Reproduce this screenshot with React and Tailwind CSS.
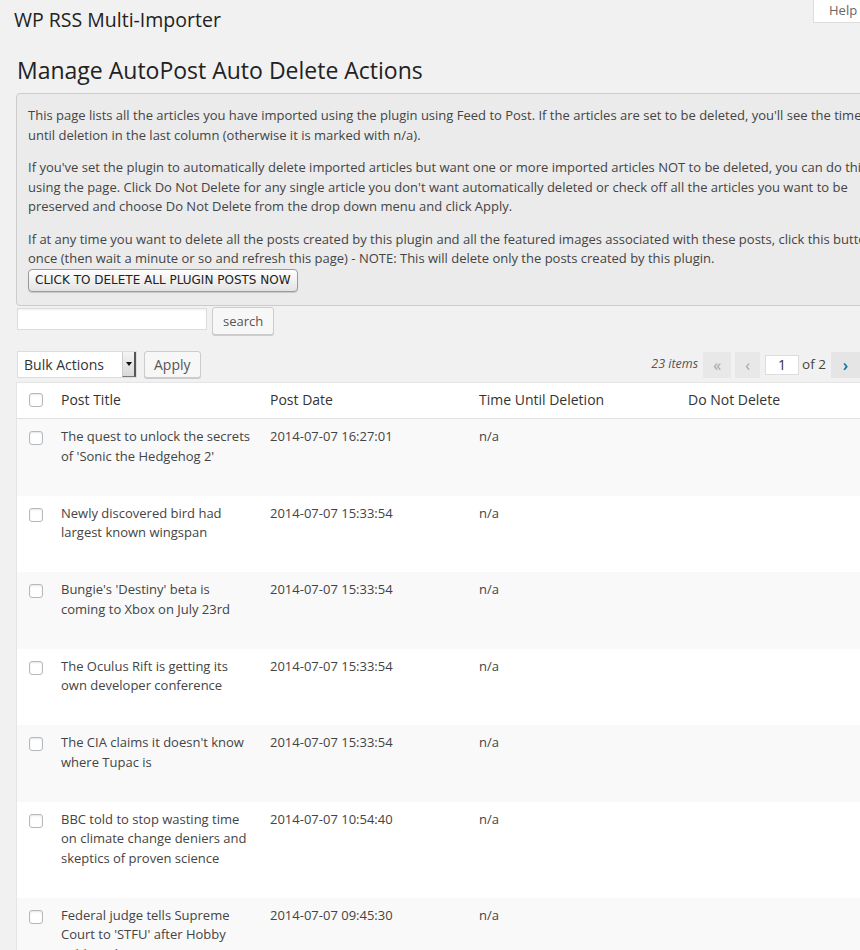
import React from "react";

const rows = [
  { title: "The quest to unlock the secrets of 'Sonic the Hedgehog 2'", date: "2014-07-07 16:27:01" },
  { title: "Newly discovered bird had largest known wingspan", date: "2014-07-07 15:33:54" },
  { title: "Bungie's 'Destiny' beta is coming to Xbox on July 23rd", date: "2014-07-07 15:33:54" },
  { title: "The Oculus Rift is getting its own developer conference", date: "2014-07-07 15:33:54" },
  { title: "The CIA claims it doesn't know where Tupac is", date: "2014-07-07 15:33:54" },
  { title: "BBC told to stop wasting time on climate change deniers and skeptics of proven science", date: "2014-07-07 10:54:40" },
  { title: "Federal judge tells Supreme Court to 'STFU' after Hobby Lobby ruling", date: "2014-07-07 09:45:30" },
];

function Check() {
  return (
    <span className="block w-[14px] h-[14px] rounded-[3px] border border-[#b4b9be] bg-white shadow-[inset_0_1px_2px_rgba(0,0,0,0.1)]" />
  );
}

export default function App() {
  return (
    <div className="relative h-[950px] overflow-hidden bg-[#f1f1f1] text-[13px] text-[#444] font-['Open_Sans',sans-serif]">
      {/* help tab */}
      <div className="absolute top-0 right-0 w-[47px] h-[23px] bg-white border-l border-b border-[#ddd] pl-[15px] text-[13px] leading-[20px] text-[#666]">
        Help
      </div>

      <div className="w-[900px]">
        <h1 className="pl-[14px] pt-[6px] text-[19.5px] leading-[28px] text-[#222]">WP RSS Multi-Importer</h1>
        <h2 className="pl-[17px] pt-[22px] text-[23px] leading-[29px] text-[#222]">Manage AutoPost Auto Delete Actions</h2>

        {/* info box */}
        <div className="ml-[16px] mt-[8px] w-[876px] rounded-[4px] border border-[#ccc] bg-[#ebebeb] pl-[11px] pt-[12px] pb-[13px] leading-[19.5px] text-[#444]">
          <p>
            This page lists all the articles you have imported using the plugin using Feed to Post. If the articles are set to be deleted, you'll see the time until deletion in the last column (otherwise it is marked with n/a).
          </p>
          <p className="mt-[13px]">
            If you've set the plugin to automatically delete imported articles but want one or more imported articles NOT to be deleted, you can do this using the page. Click Do Not Delete for any single article you don't want automatically deleted or check off all the articles you want to be preserved and choose Do Not Delete from the drop down menu and click Apply.
          </p>
          <p className="mt-[13px]">
            If at any time you want to delete all the posts created by this plugin and all the featured images associated with these posts, click this button once (then wait a minute or so and refresh this page) - NOTE: This will delete only the posts created by this plugin.
          </p>
          <button className="block h-[23px] px-[6px] rounded-[4px] border border-[#9a9a9a] bg-gradient-to-b from-white to-[#e3e3e3] shadow-[0_1px_1px_rgba(0,0,0,0.15)] font-['DejaVu_Sans',sans-serif] text-[12px] leading-[21px] text-[#222]">
            CLICK TO DELETE ALL PLUGIN POSTS NOW
          </button>
        </div>

        {/* search */}
        <div className="flex items-start gap-[5px] pl-[17px] pt-[1px]">
          <div className="mt-[1px] w-[190px] h-[22px] border border-[#ddd] bg-white shadow-[inset_0_1px_2px_rgba(0,0,0,0.07)]" />
          <button className="h-[28px] px-[10px] rounded-[3px] border border-[#ccc] bg-[#f7f7f7] text-[13px] leading-[26px] text-[#555] shadow-[0_1px_0_#ccc]">
            search
          </button>
        </div>

        {/* bulk actions + pagination */}
        <div className="flex items-center w-[860px] pl-[17px] pt-[13px] h-[47px]">
          <div className="flex w-[120px] h-[27px] border border-[#ddd] bg-white">
            <span className="flex-1 pl-[6px] text-[14px] leading-[25px] text-[#333]">Bulk Actions</span>
            <span className="flex items-center justify-center w-[14px] bg-gradient-to-b from-[#f4f4f4] to-[#d9d9d9] border-l border-[#ccc] border-r-2 border-r-[#555] border-b border-b-[#777]">
              <svg width="6" height="4" viewBox="0 0 6 4"><path d="M0 0h6L3 4z" fill="#111" /></svg>
            </span>
          </div>
          <button className="ml-[7px] h-[27px] px-[9px] rounded-[3px] border border-[#ccc] bg-[#f7f7f7] text-[14px] leading-[25px] text-[#555] shadow-[0_1px_0_#ccc]">
            Apply
          </button>

          <div className="ml-auto flex items-center">
            <span className="italic text-[12.5px] text-[#555] mr-[5px]">23 items</span>
            <span className="flex items-center justify-center w-[28px] h-[26px] bg-[#e8e8e8] text-[#a0a5aa] text-[16px]">«</span>
            <span className="ml-[4px] flex items-center justify-center w-[25px] h-[26px] bg-[#e8e8e8] text-[#a0a5aa] text-[16px]">‹</span>
            <span className="ml-[5px] w-[34px] h-[20px] border border-[#ddd] bg-white text-center text-[14px] leading-[18px] text-[#333]">1</span>
            <span className="ml-[3px] text-[13.5px] text-[#444]">of 2</span>
            <span className="ml-[5px] flex items-center justify-center w-[29px] h-[26px] bg-[#e5e5e5] text-[#0073aa] text-[16px] font-semibold">›</span>
          </div>
        </div>

        {/* table */}
        <div className="ml-[16px] w-[874px] border border-[#e5e5e5] bg-white">
          <div className="grid grid-cols-[35px_209px_209px_209px_209px] border-b border-[#e1e1e1] text-[14px] leading-[19.5px] text-[#333]">
            <div className="pl-[12px] pt-[10px]"><Check /></div>
            <div className="pl-[9px] pt-[7px] pb-[9px]">Post Title</div>
            <div className="pl-[9px] pt-[7px] pb-[9px]">Post Date</div>
            <div className="pl-[9px] pt-[7px] pb-[9px]">Time Until Deletion</div>
            <div className="pl-[9px] pt-[7px] pb-[9px]">Do Not Delete</div>
          </div>
          {rows.map((r, i) => (
            <div
              key={i}
              className={`grid grid-cols-[35px_209px_209px_209px_209px] leading-[19.5px] text-[#444] ${i % 2 === 0 ? "bg-[#f9f9f9]" : "bg-white"}`}
            >
              <div className="pl-[12px] pt-[12px]"><Check /></div>
              <div className="pl-[9px] pr-[8px] pt-[8px] pb-[29.5px]">{r.title}</div>
              <div className="pl-[9px] pt-[8px]">{r.date}</div>
              <div className="pl-[9px] pt-[8px]">n/a</div>
              <div />
            </div>
          ))}
        </div>
      </div>
    </div>
  );
}
